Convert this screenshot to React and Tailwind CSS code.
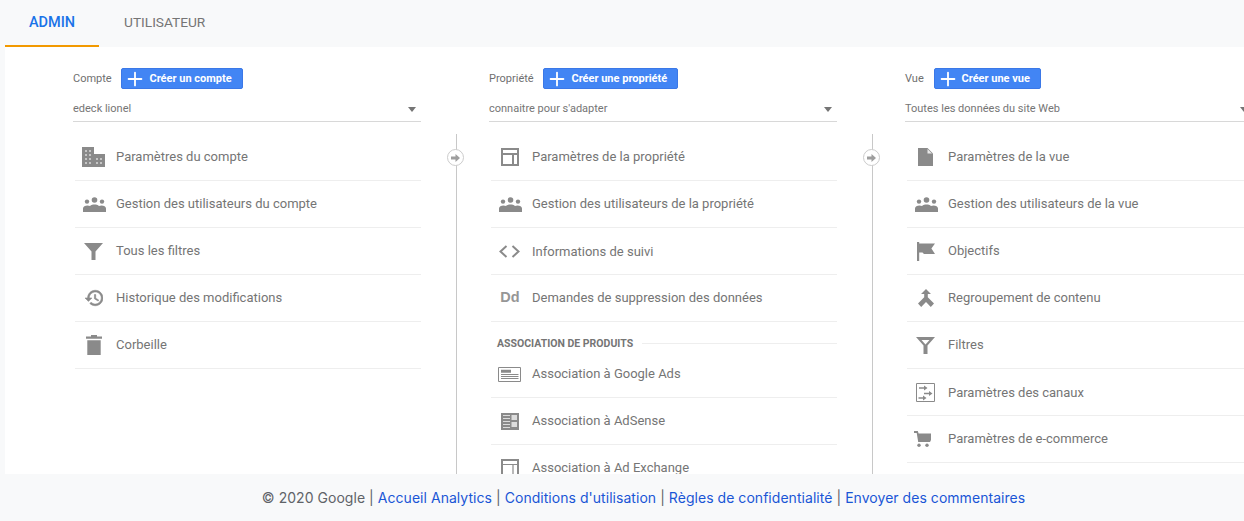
import { Plus } from 'lucide-react'

const gray = '#8a8a8a'

function People() {
  return (
    <svg width="23" height="15" viewBox="0 0 23 15" fill={gray}>
      <circle cx="11.5" cy="3" r="2.8" />
      <circle cx="4" cy="4.6" r="2.2" />
      <circle cx="19" cy="4.6" r="2.2" />
      <path d="M0 15v-3.5C0 9.6 2.2 8.4 4.5 8.4c1 0 1.8.2 2.5.6 1.2-1 2.8-1.4 4.5-1.4s3.300.4 4.500 1.400c.7-.4 1.500-.6 2.500-.6 2.300 0 4.500 1.200 4.500 3.100V15z" />
    </svg>
  )
}

const icons = {
  building: (
    <svg width="23" height="20" viewBox="0 0 23 20" fill={gray} className="mr-[1px]">
      <path d="M0 0h12v7h11v13H0z" />
      <g fill="#fff" fillOpacity="0.5">
        <rect x="3" y="3" width="2" height="2" />
        <rect x="7" y="3" width="2" height="2" />
        <rect x="3" y="7" width="2" height="2" />
        <rect x="7" y="7" width="2" height="2" />
        <rect x="3" y="11" width="2" height="2" />
        <rect x="7" y="11" width="2" height="2" />
        <rect x="3" y="15" width="2" height="2" />
        <rect x="7" y="15" width="2" height="2" />
        <rect x="14" y="11" width="2" height="2" />
        <rect x="18" y="11" width="2" height="2" />
        <rect x="14" y="15" width="2" height="2" />
        <rect x="18" y="15" width="2" height="2" />
      </g>
    </svg>
  ),
  people: <People />,
  funnel: (
    <svg width="19" height="17" viewBox="0 0 19 17" fill={gray} className="mr-[1px]">
      <path d="M0 0h19l-7.500 8.500V17h-4V8.500z" />
    </svg>
  ),
  history: (
    <svg width="18" height="18" viewBox="1 2.500 21 19" fill={gray} stroke={gray} strokeWidth="0.7">
      <path d="M13 3c-4.970 0-9 4.030-9 9H1l3.890 3.890.07.140L9 12H6c0-3.870 3.130-7 7-7s7 3.130 7 7-3.130 7-7 7c-1.930 0-3.680-.790-4.940-2.060l-1.420 1.420C8.270 19.990 10.510 21 13 21c4.970 0 9-4.030 9-9s-4.030-9-9-9zm-1 5v5l4.280 2.540.720-1.210-3.500-2.080V8H12z" />
    </svg>
  ),
  trash: (
    <svg width="16" height="20" viewBox="0 0 16 20" fill={gray}>
      <path d="M5 0h6v1.500h5v2.300H0V1.500h5zM1.300 5.300h13.400V20H1.300z" />
    </svg>
  ),
  layout: (
    <svg width="18" height="18" viewBox="0 0 18 18" fill="none" stroke={gray} strokeWidth="2" className="mr-[1px]">
      <path d="M1 1h16v16H1zM1 6h16M12 6v11" />
    </svg>
  ),
  code: (
    <svg width="21" height="13" viewBox="0 0 21 13" fill="none" stroke={gray} strokeWidth="2" className="mr-[1px]">
      <path d="M7.500 1L1.500 6.500l6 5.500M13.500 1l6 5.500-6 5.500" />
    </svg>
  ),
  dd: <span className="font-['Liberation_Sans',sans-serif] text-[14.5px] font-bold text-[#969696]">Dd</span>,
  ads: (
    <svg width="23" height="15" viewBox="0 0 23 15" fill="none" stroke={gray} className="mr-[1px]">
      <path d="M.5.500h22v14H.5z" />
      <path d="M3 3.500h10M3 5h10" strokeWidth="1.500" />
      <path d="M3 7.500h17.500M3 9.500h17.500M3 11.500h17.500" />
    </svg>
  ),
  adsense: (
    <svg width="18" height="17" viewBox="0 0 18 17" fill={gray}>
      <path d="M0 0h18v17H0z" />
      <path d="M2 2h7v1H2zM2 5h7v1H2zM2 8h7v1H2zM2 11h7v1H2zM2 14h7v1H2zM10.500 2H16v5h-5.500zM10.500 9H16v5h-5.500z" fill="#fff" fillOpacity="0.7" />
    </svg>
  ),
  exchange: (
    <svg width="18" height="18" viewBox="0 0 18 18" fill="none" stroke={gray} className="mr-[1px]">
      <path d="M1 1h16v16H1z" strokeWidth="2" />
      <path d="M1 5.500h16M12 5.500V17" strokeWidth="1.200" />
    </svg>
  ),
  page: (
    <svg width="15" height="18" viewBox="0 0 15 18" fill={gray} className="mr-[1px]">
      <path d="M0 0h9.500L15 5.500V18H0z" />
      <path d="M9.500 1v4.500H14z" fill="#fff" fillOpacity="0.8" />
    </svg>
  ),
  flag: (
    <svg width="18" height="19" viewBox="0 0 18 19" fill={gray}>
      <path d="M0 0h2.200v1.500h15.800l-3.600 5 3.600 5.500H7l-1.500-1.500H2.200V19H0z" />
    </svg>
  ),
  merge: (
    <svg width="16" height="18" viewBox="0 0 16 18" fill={gray}>
      <path d="M8 0l5 5h-3.200v3.200L16 14.500 12.800 18 8 13 3.200 18 0 14.500l6.200-6.300V5H3z" />
    </svg>
  ),
  funnelOpen: (
    <svg width="19" height="17" viewBox="0 0 19 17" fill={gray} className="mr-[1px]">
      <path fillRule="evenodd" d="M0 0h19l-7.500 8.500V17h-4V8.500zM5.500 3l4 4.500 4-4.500z" />
    </svg>
  ),
  channels: (
    <svg width="19" height="19" viewBox="0 0 19 19" fill="none" stroke={gray} className="mr-[1px]">
      <path d="M.5.500h18v18H.5z" />
      <path d="M3 5h6M8 10.500h6M2.500 15h5" strokeWidth="1.500" />
      <path d="M8 2.500l3.500 2.500-3.500 2.500zM13 8l3.500 2.500-3.500 2.500zM7 12.500l3.500 2.500-3.500 2.500z" fill={gray} stroke="none" />
    </svg>
  ),
  cart: (
    <svg width="17" height="16" viewBox="0 0 17 16" fill={gray} className="mr-[7px]">
      <path d="M0 0h3.800l.8 2.500H17v6.500l-1 2H4.200L2.700 2H0z" />
      <circle cx="5" cy="14.300" r="1.700" />
      <circle cx="13" cy="14.300" r="1.700" />
    </svg>
  ),
}

const columns = [
  {
    label: 'Compte',
    create: 'Créer un compte',
    value: 'edeck lionel',
    items: [
      ['building', 'Paramètres du compte'],
      ['people', 'Gestion des utilisateurs du compte'],
      ['funnel', 'Tous les filtres'],
      ['history', 'Historique des modifications'],
      ['trash', 'Corbeille'],
    ],
  },
  {
    label: 'Propriété',
    create: 'Créer une propriété',
    value: "connaitre pour s'adapter",
    arrow: true,
    items: [
      ['layout', 'Paramètres de la propriété'],
      ['people', 'Gestion des utilisateurs de la propriété'],
      ['code', 'Informations de suivi', true],
      ['dd', 'Demandes de suppression des données'],
    ],
    section: 'ASSOCIATION DE PRODUITS',
    sectionItems: [
      ['ads', 'Association à Google Ads'],
      ['adsense', 'Association à AdSense'],
      ['exchange', 'Association à Ad Exchange'],
    ],
  },
  {
    label: 'Vue',
    create: 'Créer une vue',
    value: 'Toutes les données du site Web',
    arrow: true,
    items: [
      ['page', 'Paramètres de la vue'],
      ['people', 'Gestion des utilisateurs de la vue'],
      ['flag', 'Objectifs'],
      ['merge', 'Regroupement de contenu'],
      ['funnelOpen', 'Filtres'],
      ['channels', 'Paramètres des canaux', true],
      ['cart', 'Paramètres de e-commerce'],
    ],
  },
]

function Row({ icon, text, low }) {
  return (
    <div className="ml-[2px] flex h-[47px] items-center border-b border-[#eeeeee]">
      <div className="flex w-[38px] shrink-0 items-center justify-center">{icons[icon]}</div>
      <span className={low ? 'mt-[2px] ml-[3px] text-[13px] text-[#757575]' : 'ml-[3px] text-[13px] text-[#757575]'}>{text}</span>
    </div>
  )
}

function Column({ col }) {
  return (
    <div className="w-[348px] shrink-0">
      <div className="flex h-[21px] items-center text-[11px] text-[#6f6f6f]">
        <span className="mr-[9.75px] pt-px">{col.label}</span>
        <button
          type="button"
          className="flex h-[21px] items-center rounded-[2px] border border-[#3b78e7] bg-[#4285f4] pr-[10px] pl-[2px] text-[11px] font-bold text-white"
        >
          <Plus size={22} strokeWidth={2} />
          <span className="ml-[3px] pt-px">{col.create}</span>
        </button>
      </div>
      <div className="mt-[5px] flex h-[28px] items-center justify-between border-b border-[#d8d8d8] pt-[3px] text-[11px] text-[#757575]">
        <span>{col.value}</span>
        <span className="mr-[5px] h-0 w-0 border-x-[4px] border-t-[5px] border-x-transparent border-t-[#757575]" />
      </div>
      <div className="relative mt-[12px]">
        {col.arrow && (
          <>
            <div className="absolute top-0 -left-[33px] h-[400px] w-px bg-[#c8c8c8]" />
            <div className="absolute top-[15px] -left-[42px] flex h-[17px] w-[17px] items-center justify-center rounded-full border border-[#cccccc] bg-white">
              <svg width="9" height="8" viewBox="0 0 9 8" fill="#9e9e9e">
                <path d="M0 2.500h4.500V0L9 4 4.500 8V5.500H0z" />
              </svg>
            </div>
          </>
        )}
        {col.items.map(([icon, text, low]) => (
          <Row key={text} icon={icon} text={text} low={low} />
        ))}
        {col.section && (
          <>
            <div className="ml-[8px] flex h-[29px] items-center gap-[9px] pt-[15px] pb-[1px]">
              <span className="text-[10.5px] font-bold text-[#757575]">{col.section}</span>
              <div className="h-px flex-1 bg-[#eeeeee]" />
            </div>
            {col.sectionItems.map(([icon, text]) => (
              <Row key={text} icon={icon} text={text} />
            ))}
          </>
        )}
      </div>
    </div>
  )
}

export default function App() {
  return (
    <div className="flex h-[521px] w-[1244px] flex-col overflow-hidden bg-[#f8f9fa] font-['Roboto',sans-serif]">
      <div className="ml-[5px] flex h-[47px] shrink-0">
        <div className="flex w-[94px] items-center justify-center border-b-2 border-[#f29900] text-[14.5px] font-medium text-[#1a73e8]">ADMIN</div>
        <div className="flex items-center px-[25px] pb-[2px] text-[13.7px] text-[#757575]">UTILISATEUR</div>
      </div>
      <div className="ml-[5px] flex min-h-0 flex-1 gap-[68px] overflow-hidden bg-white pt-[21px] pl-[68px]">
        {columns.map((col) => (
          <Column key={col.label} col={col} />
        ))}
      </div>
      <div className="flex h-[47px] shrink-0 items-center justify-center pl-[43px] font-['Inter',sans-serif] text-[14px] tracking-[0.04px] text-[#5f6368]">
        <span>© 2020 Google | </span>
        <a className="ml-1 text-[#1a56d6]">Accueil Analytics</a>
        <span className="mx-1">|</span>
        <a className="text-[#1a56d6]">Conditions d'utilisation</a>
        <span className="mx-1">|</span>
        <a className="text-[#1a56d6]">Règles de confidentialité</a>
        <span className="mx-1">|</span>
        <a className="text-[#1a56d6]">Envoyer des commentaires</a>
      </div>
    </div>
  )
}
